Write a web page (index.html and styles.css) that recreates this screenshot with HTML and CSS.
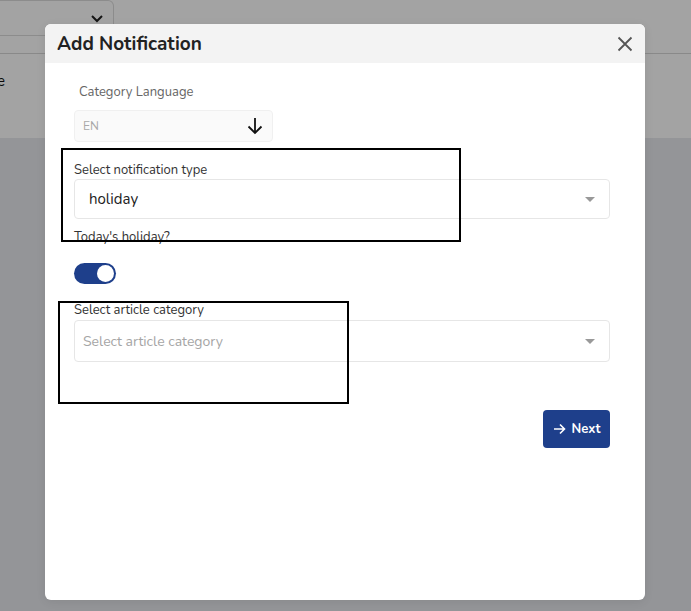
FILE: index.html
```html
<!DOCTYPE html>
<html>
<head>
<meta charset="utf-8">
<link rel="stylesheet" href="styles.css">
</head>
<body>
<div class="page">
  <div class="page-top">
    <div class="bg-select">
      <svg class="bg-chev" width="14" height="9" viewBox="0 0 14 9"><path d="M2 2 L7 7 L12 2" fill="none" stroke="#222" stroke-width="2"/></svg>
    </div>
    <div class="bg-line"></div>
    <div class="bg-text">e</div>
  </div>
  <div class="page-rest"></div>
</div>
<div class="overlay"></div>

<div class="modal">
  <div class="modal-header">
    <h2 class="modal-title">Add Notification</h2>
    <svg class="close" width="16" height="16" viewBox="0 0 16 16"><path d="M1.5 1.5 L14.5 14.5 M14.5 1.5 L1.5 14.5" stroke="#555" stroke-width="1.8" fill="none"/></svg>
  </div>
  <div class="modal-body">
    <div class="lang">
      <div class="lang-label">Category Language</div>
      <div class="lang-box">
        <span class="lang-value">EN</span>
        <svg class="lang-arrow" width="18" height="18" viewBox="0 0 18 18"><path d="M9 1 V16 M2.5 9.5 L9 16 L15.5 9.5" fill="none" stroke="#111" stroke-width="1.8"/></svg>
      </div>
    </div>

    <div class="field field-type">
      <div class="field-label">Select notification type</div>
      <div class="select select-type">
        <span class="select-value">holiday</span>
        <span class="caret"></span>
      </div>
    </div>

    <div class="field-label holiday-label">Today's holiday?</div>
    <div class="toggle"><span class="knob"></span></div>

    <div class="field field-article">
      <div class="field-label">Select article category</div>
      <div class="select select-article">
        <span class="select-placeholder">Select article category</span>
        <span class="caret"></span>
      </div>
    </div>

    <div class="actions">
      <button class="btn-next">
        <svg width="13" height="12" viewBox="0 0 13 12"><path d="M1 6 H11.5 M7 1.5 L11.5 6 L7 10.5" fill="none" stroke="#fff" stroke-width="1.6"/></svg>
        <span>Next</span>
      </button>
    </div>
  </div>
</div>

<div class="annot annot-1"></div>
<div class="annot annot-2"></div>
</body>
</html>
```

FILE: styles.css
```css
* { box-sizing: border-box; }
html, body { margin: 0; padding: 0; }
body {
  width: 691px;
  height: 611px;
  overflow: hidden;
  position: relative;
  font-family: "Nunito", "Lato", "Open Sans", sans-serif;
  background: #e8eaee;
}
.page { width: 691px; height: 611px; }
.page-top {
  height: 138px;
  background: #ffffff;
  position: relative;
}
.bg-select {
  width: 114px;
  height: 36px;
  border: 1px solid #dcdcdc;
  border-left: none;
  border-radius: 0 6px 6px 0;
  display: flex;
  align-items: center;
  justify-content: flex-end;
  padding-right: 9px;
  margin-top: 0;
}
.bg-line {
  margin-top: 17px;
  height: 1px;
  background: #d6d6d6;
}
.bg-text {
  margin-top: 17px;
  font-size: 15px;
  color: #111;
  margin-left: -3px;
}
.page-rest { height: 473px; background: #e8eaee; }
.overlay {
  position: absolute;
  inset: 0;
  background: rgba(0, 0, 0, 0.36);
}
.modal {
  position: absolute;
  left: 45px;
  top: 24px;
  width: 600px;
  height: 576px;
  background: #fff;
  border-radius: 6px;
  overflow: hidden;
  box-shadow: 0 2px 10px rgba(0,0,0,0.08);
}
.modal-header {
  height: 39px;
  background: #f3f3f3;
  display: flex;
  align-items: center;
  justify-content: space-between;
  padding: 0 12px 0 12px;
}
.modal-title {
  margin: 0;
  font-size: 19px;
  font-weight: 700;
  color: #222;
}
.modal-body {
  padding: 20px 35px 0 29px;
}
.lang { width: 199px; }
.lang-label {
  font-size: 13px;
  color: #666;
  padding-left: 5px;
  line-height: 18px;
}
.lang-box {
  margin-top: 9px;
  height: 32px;
  background: #fafafa;
  border: 1px solid #f0f0f0;
  border-radius: 4px;
  display: flex;
  align-items: center;
  justify-content: space-between;
  padding: 0 8px 0 8px;
}
.lang-value { font-size: 12px; color: #a8a8a8; }
.field-label {
  font-size: 13px;
  color: #333;
  line-height: 18px;
}
.field-type { margin-top: 19px; }
.select {
  border: 1px solid #e6e6e6;
  border-radius: 4px;
  display: flex;
  align-items: center;
  justify-content: space-between;
  padding: 0 14px 0 14px;
}
.select-type { height: 40px; margin-top: 0; }
.select-value { font-size: 15px; color: #222; }
.caret {
  width: 0; height: 0;
  border-left: 5px solid transparent;
  border-right: 5px solid transparent;
  border-top: 5px solid #999;
}
.holiday-label { margin-top: 9px; }
.toggle {
  margin-top: 17px;
  width: 42px;
  height: 21px;
  border-radius: 11px;
  background: #1e3f8b;
  display: flex;
  align-items: center;
  justify-content: flex-end;
  padding-right: 2px;
}
.knob {
  width: 17px; height: 17px;
  border-radius: 50%;
  background: #fff;
}
.field-article { margin-top: 17px; }
.select-article { height: 42px; margin-top: 1px; padding-left: 8px; }
.select-placeholder { font-size: 14px; color: #a5a5a5; }
.actions {
  display: flex;
  justify-content: flex-end;
  margin-top: 48px;
}
.btn-next {
  width: 67px;
  height: 38px;
  background: #1e3f8b;
  border: none;
  border-radius: 4px;
  color: #fff;
  font-family: inherit;
  font-size: 13px;
  font-weight: 700;
  display: flex;
  align-items: center;
  justify-content: center;
  gap: 6px;
  padding: 0;
}
.annot {
  position: absolute;
  border: 2px solid #000;
}
.annot-1 { left: 61px; top: 148px; width: 400px; height: 94px; }
.annot-2 { left: 58px; top: 301px; width: 291px; height: 103px; }
```
